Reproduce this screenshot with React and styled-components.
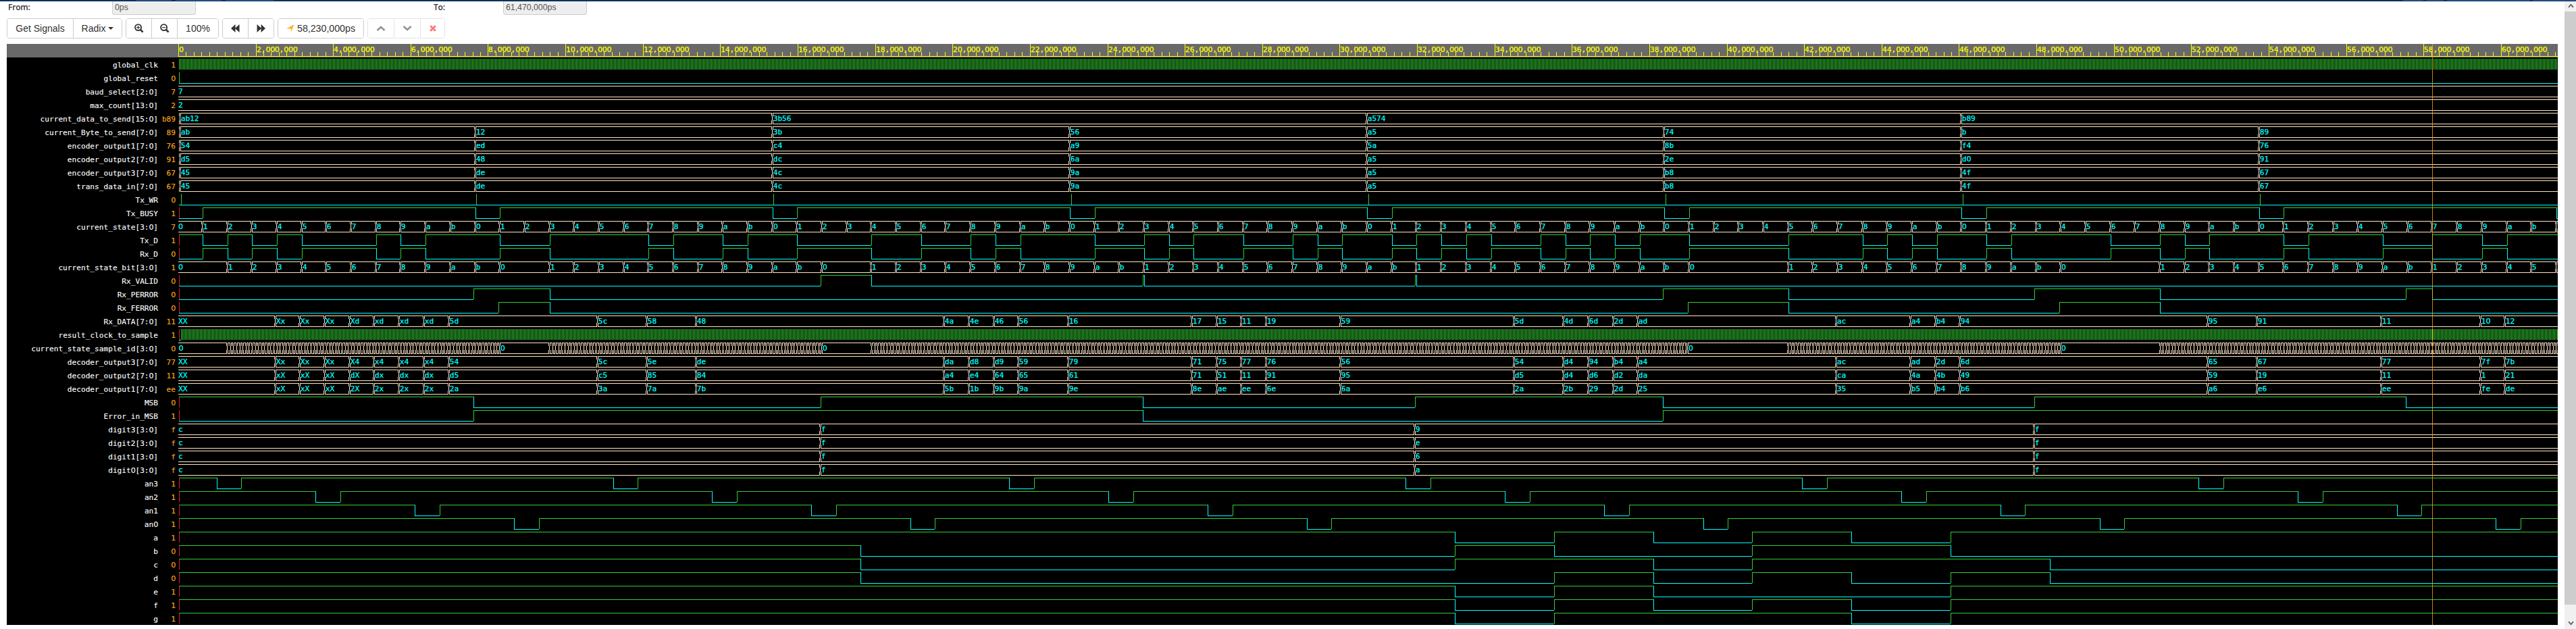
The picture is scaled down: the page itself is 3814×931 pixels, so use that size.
import React from "react";
import styled, { createGlobalStyle, css } from "styled-components";

const GlobalStyle = createGlobalStyle`
  *, *::before, *::after { box-sizing: border-box; }
  body {
    margin: 0;
    background: #fff;
    color: #333;
    font-family: "Liberation Sans", Arial, sans-serif;
    overflow: hidden;
  }
`;

/* ---------- colours and scale ---------- */

const HIGH = "#32cd32";
const LOW = "#00ffff";
const BUS = "#ffe4c4";
const UNDEFINED = "#dc143c";

const PX_PER_MICRO = 57.317;
const WAVE_WIDTH = 3523;
const ROW_HEIGHT = 20;
const TOP = 2.5;
const BOTTOM = 18.5;

const toX = (t) => Math.floor(0.4 + t * PX_PER_MICRO);
const bit = (k) => 0.63 + 0.64 * k;
const early = (k) => bit(k) - 0.04;
const seg = (j) => 17.62 + 2.56 * j;

/* ---------- signal data ---------- */

const bitEdges = [
  0, 1, 2, 3, 4, 7, 8, 9, 12, 14, 18, 19, 21, 22, 24, 27, 29, 31, 32, 33, 36, 38, 39, 40, 42,
  44, 45, 46, 48, 49, 50, 51, 52, 54, 55, 56, 57, 58, 60, 64, 67, 68, 69, 70, 72, 73, 77, 79,
  80, 81, 84, 85, 88, 90, 92, 93,
].map(bit);

const byteTimes = [0.06, 7.67, 15.35, 23.03, 30.71, 38.39, 46.07, 53.75];
const byteBus = (text) => text.split(" ").map((v, i) => [byteTimes[i], v]);

const HEX = "0123456789ab";
const stateBus = [
  [0, "0"],
  ...Array.from({ length: 96 }, (_, k) => [bit(k), k === 95 ? "" : HEX[(k + 1) % 12]]),
];

const frames = [
  [1, 12], [14, 25], [27, 38], [38, 49], [49, 60], [64, 75], [79, 90], [90, 96],
];
const stateBitBus = (() => {
  const out = [[0, "0"]];
  frames.forEach(([start, end], i) => {
    for (let k = start; k < end; k += 1) {
      out.push([bit(k), k === 95 ? "" : HEX[k - start + 1]]);
    }
    const next = frames[i + 1];
    if (next && next[0] !== end) out.push([bit(end), "0"]);
  });
  return out;
})();

const dataBits = [
  3, 4, 5, 6, 7, 8, 9, 10, 16, 18, 20, 30, 31, 32, 33, 35, 40, 41, 42, 43, 46, 53, 55, 56, 57,
  58, 66, 69, 70, 71, 81, 83, 88, 92, 93,
];
const dataBus = (text) => [
  [0, "XX"],
  ...text.split(" ").map((v, i) => [early(dataBits[i]), v]),
];

const digitBus = (v) => [
  [0, "c"],
  [early(25), "f"],
  [early(49), v],
  [early(74), "f"],
];

const anodeEdges = (first) => {
  const out = [];
  for (let t = first; t < 61.4; t += 10.24) out.push(t, t + 0.64);
  return out;
};

const busyEdges = (() => {
  const out = [bit(0)];
  for (let f = 0; f < 8; f += 1) out.push(bit(11 + 12 * f), bit(12 + 12 * f));
  return out.filter((t) => t < 61.47);
})();

const wire = (name, value, start, edges, extra = {}) => ({
  kind: "wire", name, value, start, edges, ...extra,
});
const bus = (name, value, data, extra = {}) => ({ kind: "bus", name, value, data, ...extra });

const signals = [
  { kind: "clock", name: "global_clk", value: "1", from: 1 },
  wire("global_reset", "0", 0, [], { initial: HIGH }),
  bus("baud_select[2:0]", "7", [[0, "7"]]),
  bus("max_count[13:0]", "2", [[0, "2"]]),
  bus("current_data_to_send[15:0]", "b89", [
    [0.06, "ab12"], [15.35, "3b56"], [30.71, "a574"], [46.07, "b89"],
  ]),
  bus("current_Byte_to_send[7:0]", "89", byteBus("ab 12 3b 56 a5 74 b 89")),
  bus("encoder_output1[7:0]", "76", byteBus("54 ed c4 a9 5a 8b f4 76")),
  bus("encoder_output2[7:0]", "91", byteBus("d5 48 dc 6a a5 2e d0 91")),
  bus("encoder_output3[7:0]", "67", byteBus("45 de 4c 9a a5 b8 4f 67")),
  bus("trans_data_in[7:0]", "67", byteBus("45 de 4c 9a a5 b8 4f 67")),
  wire("Tx_WR", "0", 0, [], {
    initial: null,
    pulses: [0.07, 7.7, 15.38, 23.06, 30.74, 38.42, 46.1, 53.78],
  }),
  wire("Tx_BUSY", "1", 0, busyEdges),
  bus("current_state[3:0]", "7", stateBus),
  wire("Tx_D", "1", 1, bitEdges),
  wire("Rx_D", "0", 0, bitEdges),
  bus("current_state_bit[3:0]", "1", stateBitBus),
  wire("Rx_VALID", "0", 0, [early(25), bit(27), early(38), bit(38), early(49), bit(49)]),
  wire("Rx_PERROR", "0", 0, [
    early(11), bit(14), early(59), bit(64), early(74), bit(79), early(89), bit(90),
  ]),
  wire("Rx_FERROR", "0", 0, [early(12), bit(14), early(60), bit(64), early(75), bit(79)]),
  bus("Rx_DATA[7:0]", "11", dataBus(
    "Xx Xx Xx Xd xd xd xd 5d 5c 58 48 4a 4e 46 56 16 17 15 11 19 59 5d 4d 6d 2d ad ac a4 b4 94 95 91 11 10 12"
  )),
  { kind: "clock", name: "result_clock_to_sample", value: "1", from: 4, undefinedStart: true },
  { kind: "samples", name: "current_state_sample_id[3:0]", value: "0" },
  bus("decoder_output3[7:0]", "77", dataBus(
    "Xx Xx Xx X4 x4 x4 x4 54 5c 5e de da d8 d9 59 79 71 75 77 76 56 54 d4 94 b4 a4 ac ad 2d 6d 65 67 77 7f 7b"
  )),
  bus("decoder_output2[7:0]", "11", dataBus(
    "xX xX xX dX dx dx dx d5 c5 85 84 a4 e4 64 65 61 71 51 11 91 95 d5 d4 d6 d2 da ca 4a 4b 49 59 19 11 1 21"
  )),
  bus("decoder_output1[7:0]", "ee", dataBus(
    "xX xX xX 2X 2x 2x 2x 2a 3a 7a 7b 5b 1b 9b 9a 9e 8e ae ee 6e 6a 2a 2b 29 2d 25 35 b5 b4 b6 a6 e6 ee fe de"
  )),
  wire("MSB", "0", 1, [11, 25, 38, 49, 59, 74, 89].map(early)),
  wire("Error_in_MSB", "1", 0, [11, 38, 59].map(early)),
  bus("digit3[3:0]", "f", digitBus("9")),
  bus("digit2[3:0]", "f", digitBus("e")),
  bus("digit1[3:0]", "f", digitBus("6")),
  bus("digit0[3:0]", "f", digitBus("a")),
  wire("an3", "1", 1, anodeEdges(0.99)),
  wire("an2", "1", 1, anodeEdges(3.55)),
  wire("an1", "1", 1, anodeEdges(6.11)),
  wire("an0", "1", 1, anodeEdges(8.67)),
  wire("a", "1", 1, [6, 7, 8, 9, 10, 11].map(seg)),
  wire("b", "0", 1, [0, 6, 7, 9, 11].map(seg)),
  wire("c", "0", 1, [0, 6, 8, 9, 12].map(seg)),
  wire("d", "0", 1, [0, 7, 8, 9, 10, 11, 12].map(seg)),
  wire("e", "1", 1, [6, 7, 8, 11].map(seg)),
  wire("f", "1", 1, [6, 7, 8, 9, 10, 11].map(seg)),
  wire("g", "1", 1, [6, 7, 10, 11].map(seg)),
];

/* ---------- styled parts ---------- */

const Window = styled.div`
  display: flex;
  flex-direction: column;
  width: 3814px;
  height: 931px;
  background: #fff;
  overflow: hidden;
`;

const TabStrip = styled.div`
  display: flex;
  flex: none;
  height: 2px;
  background: #003a70;
  border-bottom: 1px solid #00264d;
`;

const TabEdge = styled.div`
  flex: none;
  width: ${(p) => p.$width}px;
  margin-left: ${(p) => p.$gap}px;
  background: #2a6ba8;
`;

const Body = styled.div`
  display: flex;
  flex: 1;
  min-height: 0;
`;

const Content = styled.main`
  flex: 1;
  min-width: 0;
  padding-left: 10px;
`;

const RangeRow = styled.div`
  display: flex;
  height: 20px;
`;

const RangeField = styled.div`
  display: flex;
  width: ${(p) => p.$width}px;
  padding-left: 2px;
`;

const RangeLabel = styled.label`
  width: ${(p) => p.$width}px;
  font-family: "Open Sans", "Noto Sans", sans-serif;
  font-size: 12px;
  font-weight: 600;
  letter-spacing: -0.2px;
  line-height: 18px;
  color: #333;
`;

const RangeValue = styled.div`
  width: 124px;
  height: 20px;
  padding-left: 3px;
  border: 1px solid #ccc;
  border-top: 0;
  border-radius: 0 0 4px 4px;
  background: #eee;
  color: #555;
  font-size: 12.3px;
  line-height: 18px;
`;

const Toolbar = styled.div`
  display: flex;
  gap: 5px;
  height: 43px;
  padding-top: 5px;
`;

const ButtonGroup = styled.div`
  display: flex;
  height: 30px;
  border: 1px solid #ccc;
  border-radius: 4px;
  overflow: hidden;
  opacity: ${(p) => (p.$disabled ? 0.52 : 1)};
`;

const ToolButton = styled.button`
  display: flex;
  align-items: center;
  justify-content: center;
  gap: ${(p) => p.$gap ?? 0}px;
  width: ${(p) => p.$width}px;
  padding: 0;
  border: 0;
  background: #fff;
  color: #333;
  font-family: "Liberation Sans", Arial, sans-serif;
  font-size: ${(p) => p.$size ?? 14}px;
  line-height: 28px;

  & + & {
    border-left: 1px solid #ccc;
  }
`;

const Caret = styled.span`
  border: 4px solid transparent;
  border-top-color: #333;
  border-bottom: 0;
`;

const Icon = styled.svg`
  display: block;
  flex: none;
`;

const monoFont = css`
  font-family: "DejaVu Sans Mono", "Liberation Mono", monospace;
  font-size: 11.15px;
`;

const zeroFont = css`
  font-family: "DejaVu Sans", sans-serif;
  letter-spacing: -0.38px;
`;

const Viewer = styled.section`
  position: relative;
  width: 3777px;
  background: #000;
`;

const Ruler = styled.header`
  display: flex;
  justify-content: flex-end;
  height: 20px;
  background: #696969;
`;

const SignalRow = styled.div`
  display: flex;
  height: ${ROW_HEIGHT}px;
`;

const SignalName = styled.div`
  ${monoFont}
  width: 224px;
  padding-top: 2px;
  color: #fff;
  line-height: 19px;
  text-align: right;
  white-space: nowrap;
  -webkit-text-stroke: 0.1px currentColor;
`;

const SignalValue = styled(SignalName)`
  width: 30px;
  padding-right: 4px;
  color: #ffab1e;
`;

const Zero = styled.span`
  ${zeroFont}
`;

const Plot = styled.svg`
  display: block;
  flex: none;
  shape-rendering: crispEdges;
`;

const PlotText = styled.text`
  ${monoFont}
  fill: ${(p) => p.$color};
  stroke: ${(p) => p.$color};
  stroke-width: 0.25px;
`;

const PlotZero = styled.tspan`
  ${zeroFont}
`;

const Cursor = styled.div`
  position: absolute;
  top: 0;
  bottom: 0;
  left: ${(p) => p.$x}px;
  width: 1px;
  background: orange;
  opacity: 0.8;
`;

const Scrollbar = styled.aside`
  display: flex;
  flex-direction: column;
  width: 17px;
  background: #f0f0f0;
`;

const ScrollButton = styled.div`
  display: flex;
  align-items: ${(p) => (p.$end ? "flex-end" : "flex-start")};
  justify-content: center;
  height: ${(p) => p.$height}px;
  padding: ${(p) => (p.$end ? "0 0 5px 1px" : "3px 0 0 1px")};
`;

const ScrollThumb = styled.div`
  height: 878px;
  background: #cdcdcd;
`;

/* ---------- text with an open zero ---------- */

function OpenZero({ children, as: Part }) {
  return children
    .split(/(0+)/)
    .filter(Boolean)
    .map((piece, i) => (piece[0] === "0" ? <Part key={i}>{piece}</Part> : piece));
}

/* ---------- wave drawings ---------- */

function WireWave({ start, edges, initial = UNDEFINED, pulses = [] }) {
  let high = "";
  let low = "";
  let level = start;
  let x = 1;
  edges.forEach((t) => {
    const next = toX(t);
    if (level) {
      high += `M${x} ${TOP}H${next}`;
      low += `M${next + 0.5} 2V19`;
    } else {
      low += `M${x} ${BOTTOM}H${next}`;
      high += `M${next + 0.5} 2V18`;
    }
    level = 1 - level;
    x = next;
  });
  if (level) high += `M${x} ${TOP}H${WAVE_WIDTH}`;
  else low += `M${x} ${BOTTOM}H${WAVE_WIDTH}`;
  pulses.forEach((t) => {
    high += `M${toX(t) + 0.5} 2V18`;
  });
  return (
    <>
      {initial && <path d="M1.5 2V18" stroke={initial} />}
      <path d={low} stroke={LOW} fill="none" />
      <path d={high} stroke={HIGH} fill="none" />
    </>
  );
}

const crossing = (c) =>
  `M${c - 0.5} 2V7M${c - 0.5} 13V19M${c + 0.5} 7V13M${c + 1.5} 2V7M${c + 1.5} 13V19`;

function busPath(times) {
  let d = "";
  let x = times[0] === 0 ? 0 : 1;
  times.forEach((t) => {
    if (t === 0) return;
    const c = toX(t) - 1;
    if (c > x) d += `M${x} ${TOP}H${c}M${x} ${BOTTOM}H${c}`;
    d += crossing(c);
    x = c + 1;
  });
  return `${d}M${x} ${TOP}H${WAVE_WIDTH}M${x} ${BOTTOM}H${WAVE_WIDTH}`;
}

function BusWave({ data }) {
  return (
    <>
      <path d={busPath(data.map(([t]) => t))} stroke={BUS} fill="none" />
      {data.map(([t, v]) =>
        v ? (
          <PlotText key={t} x={t === 0 ? 0 : toX(t) + 0.7} y={14} $color={LOW}>
            <OpenZero as={PlotZero}>{v}</OpenZero>
          </PlotText>
        ) : null
      )}
    </>
  );
}

function SampleWave() {
  const times = [0];
  const bursts = [[1, 12], [14, 25], [27, 59.9375], [64, 75], [79, 97]];
  bursts.forEach(([a, b]) => {
    const end = bit(b);
    for (let t = bit(a) + 0.01; t < Math.min(end - 0.03, 61.46); t += 0.08) times.push(t);
    if (end < 61.46) times.push(end);
  });
  const idle = [0, bit(12), bit(25), early(60), bit(75)];
  return (
    <>
      <path d={busPath(times)} stroke={BUS} fill="none" />
      {idle.map((t) => (
        <PlotText key={t} x={t === 0 ? 0.5 : toX(t) + 0.7} y={14} $color={LOW}>
          <OpenZero as={PlotZero}>0</OpenZero>
        </PlotText>
      ))}
    </>
  );
}

function ClockWave({ from, undefinedStart }) {
  let d = "";
  for (let x = from; x < WAVE_WIDTH; x += 2) d += `M${x + 0.5} 2V18`;
  return (
    <>
      {undefinedStart && <path d="M1.5 2V18" stroke={UNDEFINED} />}
      {undefinedStart && <path d={`M1 ${BOTTOM}H4`} stroke={LOW} />}
      <path d={d} stroke={HIGH} />
    </>
  );
}

const waves = { wire: WireWave, bus: BusWave, samples: SampleWave, clock: ClockWave };

function RulerPlot() {
  let d = `M0 18.5H${WAVE_WIDTH}`;
  const labels = [];
  for (let i = 0; i * 0.2 < 61.47; i += 1) {
    const x = toX(i * 0.2);
    const major = i % 10 === 0;
    d += `M${x + 0.5} ${major ? 0 : 12}V18`;
    if (major) labels.push([x, i ? `${i / 5},000,000` : "0"]);
  }
  return (
    <Plot width={WAVE_WIDTH} height={20}>
      <path d={d} stroke="#ff0" fill="none" />
      {labels.map(([x, v]) => (
        <PlotText key={v} x={x + 1} y={12} $color="#ff0">
          <OpenZero as={PlotZero}>{v}</OpenZero>
        </PlotText>
      ))}
    </Plot>
  );
}

/* ---------- icons ---------- */

const ZoomIcon = ({ plus }) => (
  <Icon width="14" height="14" viewBox="0 0 14 14" fill="none" stroke="#333">
    <circle cx="5.6" cy="5.6" r="4.5" strokeWidth="1.9" />
    <path d="M9 9l3.6 3.6" strokeWidth="2.6" />
    <path d={plus ? "M3.2 5.6h4.8M5.6 3.2v4.8" : "M3.2 5.6h4.8"} strokeWidth="1.3" />
  </Icon>
);

const RewindIcon = () => (
  <Icon width="13" height="12" viewBox="0 0 13 12" fill="#333">
    <path d="M0 6L6.5 0v12zM6 6l6.5-6v12z" />
  </Icon>
);

const ForwardIcon = () => (
  <Icon width="13" height="12" viewBox="0 0 13 12" fill="#333">
    <path d="M13 6L6.5 0v12zM7 6L.5 0v12z" />
  </Icon>
);

const ArrowIcon = () => (
  <Icon width="12" height="12" viewBox="0 0 12 12" fill="#ffb029">
    <path d="M11.6.2L6.8 11.8V6.4H0z" />
  </Icon>
);

const ChevronIcon = ({ down }) => (
  <Icon width="14" height="10" viewBox="0 0 14 10" fill="none" stroke="#333" strokeWidth="2.7">
    <path d={down ? "M1.5 2l5.5 5L12.5 2" : "M1.5 8L7 3l5.5 5"} />
  </Icon>
);

const RemoveIcon = () => (
  <Icon width="10" height="10" viewBox="0 0 10 10" fill="none" stroke="#f00" strokeWidth="3">
    <path d="M1.2 1.2l7.6 7.6M8.8 1.2l-7.6 7.6" />
  </Icon>
);

const ScrollArrow = ({ down }) => (
  <Icon width="9" height="7" viewBox="0 0 9 7" fill="none" stroke="#606060" strokeWidth="1.8">
    <path d={down ? "M1 1.2l3.5 4L8 1.2" : "M1 5.8l3.5-4L8 5.8"} />
  </Icon>
);

/* ---------- page ---------- */

const tabEdges = [
  [202, 52], [6, 68], [6, 71], [3153, 30], [4, 26], [5, 123], [4, 64],
];

export default function App() {
  return (
    <Window>
      <GlobalStyle />
      <TabStrip>
        {tabEdges.map(([gap, width], i) => (
          <TabEdge key={i} $gap={gap} $width={width} />
        ))}
      </TabStrip>
      <Body>
        <Content>
          <RangeRow>
            <RangeField $width={630}>
              <RangeLabel $width={154}>From:</RangeLabel>
              <RangeValue>0ps</RangeValue>
            </RangeField>
            <RangeField $width={400}>
              <RangeLabel $width={103}>To:</RangeLabel>
              <RangeValue>61,470,000ps</RangeValue>
            </RangeField>
          </RangeRow>
          <Toolbar>
            <ButtonGroup>
              <ToolButton $width={97}>Get Signals</ToolButton>
              <ToolButton $width={72} $gap={4}>
                Radix
                <Caret />
              </ToolButton>
            </ButtonGroup>
            <ButtonGroup>
              <ToolButton $width={37}><ZoomIcon plus /></ToolButton>
              <ToolButton $width={38}><ZoomIcon /></ToolButton>
              <ToolButton $width={61}>100%</ToolButton>
            </ButtonGroup>
            <ButtonGroup>
              <ToolButton $width={37}><RewindIcon /></ToolButton>
              <ToolButton $width={38}><ForwardIcon /></ToolButton>
            </ButtonGroup>
            <ButtonGroup>
              <ToolButton $width={126} $gap={4} $size={14.2}>
                <ArrowIcon />
                58,230,000ps
              </ToolButton>
            </ButtonGroup>
            <ButtonGroup $disabled>
              <ToolButton $width={38}><ChevronIcon /></ToolButton>
              <ToolButton $width={39}><ChevronIcon down /></ToolButton>
              <ToolButton $width={36}><RemoveIcon /></ToolButton>
            </ButtonGroup>
          </Toolbar>
          <Viewer>
            <Ruler>
              <RulerPlot />
            </Ruler>
            {signals.map(({ kind, name, value, ...rest }) => {
              const Wave = waves[kind];
              return (
                <SignalRow key={name}>
                  <SignalName><OpenZero as={Zero}>{name}</OpenZero></SignalName>
                  <SignalValue><OpenZero as={Zero}>{value}</OpenZero></SignalValue>
                  <Plot width={WAVE_WIDTH} height={ROW_HEIGHT}>
                    <Wave {...rest} />
                  </Plot>
                </SignalRow>
              );
            })}
            <Cursor $x={254 + toX(58.23)} />
          </Viewer>
        </Content>
        <Scrollbar>
          <ScrollButton $height={15}><ScrollArrow /></ScrollButton>
          <ScrollThumb />
          <ScrollButton $height={36} $end><ScrollArrow down /></ScrollButton>
        </Scrollbar>
      </Body>
    </Window>
  );
}
